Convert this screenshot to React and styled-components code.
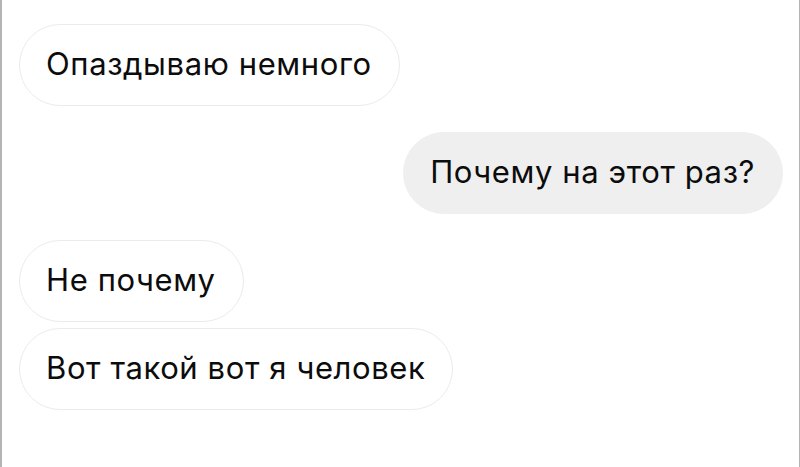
import React from 'react'
import styled, { createGlobalStyle } from 'styled-components'

const GlobalStyle = createGlobalStyle`
  html, body {
    margin: 0;
    padding: 0;
    background: #fff;
  }
  body {
    font-family: Inter, "Liberation Sans", Arial, sans-serif;
  }
`

const messages = [
  { id: 1, text: 'Опаздываю немного', mine: false },
  { id: 2, text: 'Почему на этот раз?', mine: true },
  { id: 3, text: 'Не почему', mine: false },
  { id: 4, text: 'Вот такой вот я человек', mine: false },
]

const App = () => {
  return (
    <>
      <GlobalStyle />
      <Screen>
        <Thread>
          {messages.map((msg, i) => {
            const prev = messages[i - 1]
            const grouped = prev && prev.mine === msg.mine
            return (
              <Row key={msg.id} $mine={msg.mine} $grouped={grouped} $first={i === 0}>
                <Bubble $mine={msg.mine}>{msg.text}</Bubble>
              </Row>
            )
          })}
        </Thread>
      </Screen>
    </>
  )
}

const Screen = styled.div`
  width: 800px;
  height: 467px;
  box-sizing: border-box;
  border-left: 2px solid #b4b4b4;
  border-right: 1px solid #b4b4b4;
  background: #fff;
  overflow: hidden;
`

const Thread = styled.div`
  display: flex;
  flex-direction: column;
  padding: 24px 16px 0 17px;
`

const Row = styled.div`
  display: flex;
  justify-content: ${p => (p.$mine ? 'flex-end' : 'flex-start')};
  margin-top: ${p => (p.$first ? '0' : p.$grouped ? '6px' : '26px')};
`

const Bubble = styled.div`
  display: inline-flex;
  align-items: center;
  box-sizing: border-box;
  height: 82px;
  padding: 0 27px 3px 26px;
  border-radius: 41px;
  font-size: 31px;
  letter-spacing: 0.6px;
  color: #0c0c0c;
  background: ${p => (p.$mine ? '#efefef' : '#fff')};
  border: 1.5px solid ${p => (p.$mine ? '#efefef' : '#ebebeb')};
`

export default App
